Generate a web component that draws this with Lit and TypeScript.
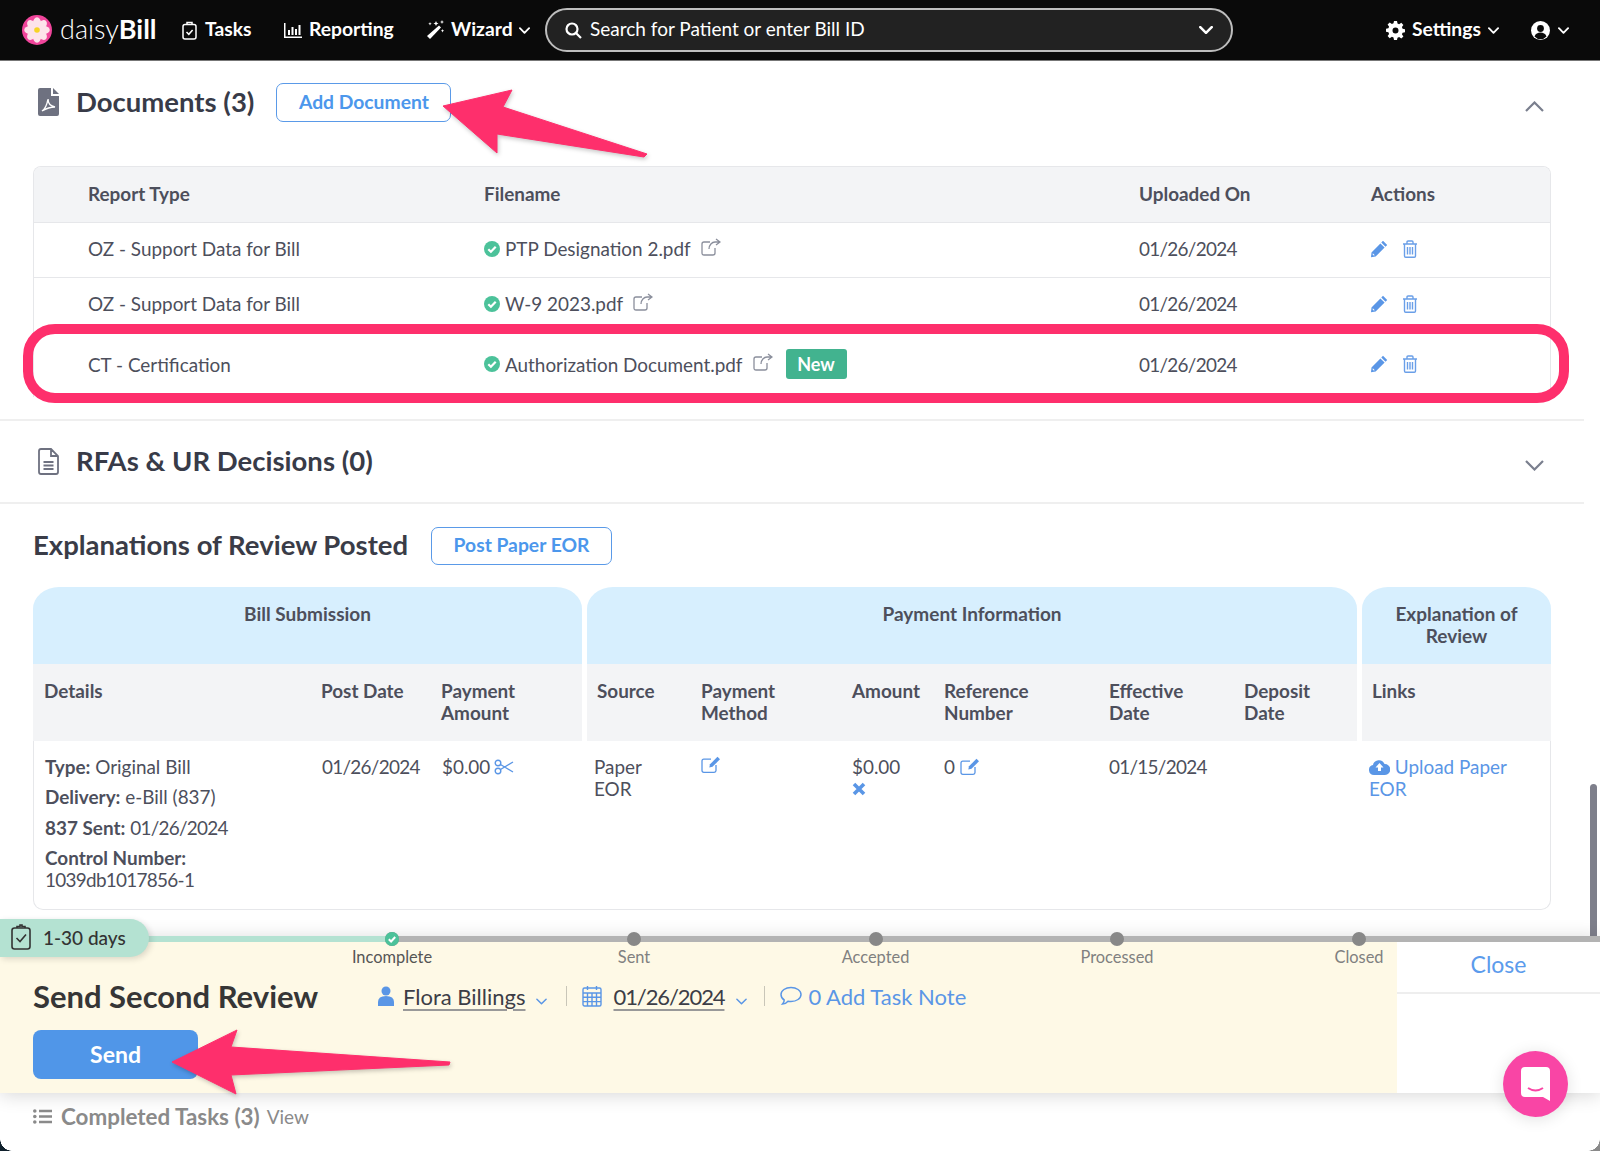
import { LitElement, html, css, svg } from "lit";
import { customElement } from "lit/decorators.js";

const chevDown = (w: number, color = "currentColor", sw = 2) => html`<svg width=${w} height=${Math.round(w * 0.6)} viewBox="0 0 12 7" fill="none" stroke=${color} stroke-width=${sw} stroke-linecap="round" stroke-linejoin="round"><path d="M1 1l5 5 5-5"/></svg>`;
const pencil = html`<svg class="ic" width="18" height="18" viewBox="0 0 18 18"><path fill="#5a96e6" d="M13 .8l4.200 4.200-1.700 1.700-4.200-4.200zM10.400 3.400l4.200 4.200L5.600 16.600 1 17.200l.5-4.800z"/><path fill="#fff" d="M2.800 13.200l2 2-1.200.2-1-1z"/></svg>`;
const trash = html`<svg class="ic" width="16" height="18" viewBox="0 0 16 18" fill="none" stroke="#6a9fe8" stroke-width="1.400"><path d="M1 4h14M5 4V2q0-1 1-1h4q1 0 1 1v2M2.500 4v12q0 1.200 1.200 1.200h8.600q1.200 0 1.200-1.200V4M5.500 7v7.500M8 7v7.500M10.500 7v7.500"/></svg>`;
const ext = html`<svg class="ic" width="20" height="18" viewBox="0 0 20 18" fill="none" stroke="#8b8f9c" stroke-width="1.300"><path d="M14 10v5q0 2-2 2H3q-2 0-2-2V6q0-2 2-2h6"/><path d="M8 11c0-4 3-7 6-7h4M15 1l4 3-4 3"/></svg>`;
const check = html`<svg class="ic" width="16" height="16" viewBox="0 0 16 16"><circle cx="8" cy="8" r="8" fill="#4cc29a"/><path d="M4.300 8.200l2.600 2.600 4.800-5" fill="none" stroke="#fff" stroke-width="2.200"/></svg>`;
const editBox = html`<svg class="ic" width="20" height="17" viewBox="0 0 20 17" fill="none" stroke="#5a96e6" stroke-width="1.300"><path d="M15 9v5.500q0 1.800-1.800 1.800H2.800Q1 16.300 1 14.500V5q0-1.800 1.800-1.800H10"/><path fill="#5a96e6" stroke="none" d="M16.500 .8l2.500 2.500-7.500 7.500-3.200.7.700-3.200z"/></svg>`;

const rows = [
  { type: "OZ - Support Data for Bill", file: "PTP Designation 2.pdf", isNew: false, tall: false },
  { type: "OZ - Support Data for Bill", file: "W-9 2023.pdf", isNew: false, tall: false },
  { type: "CT - Certification", file: "Authorization Document.pdf", isNew: true, tall: true },
];

const stages = [
  ["Incomplete", 392, true],
  ["Sent", 634, false],
  ["Accepted", 875.500, false],
  ["Processed", 1117, false],
  ["Closed", 1359, false],
] as const;

@customElement("app-root")
export class AppRoot extends LitElement {
  static styles = css`
    :host { display: block; position: relative; width: 1600px; height: 1151px; overflow: hidden; background: #fff; font-family: "Lato", "Liberation Sans", sans-serif; color: #4d4f5c; font-size: 18.900px; }
    * { box-sizing: border-box; }
    .ic { flex: none; display: block; }
    .num { letter-spacing: -.7px; }
    .numl { letter-spacing: -1.100px; }

    /* Nav */
    .nav { height: 61px; background: #0a0a0a; color: #fff; display: flex; align-items: center; padding-left: 22px; font-weight: 700; font-size: 19.300px; border-bottom: 1px solid #777; }
    .t { margin-bottom: 4px; }
    .logo { width: 30px; height: 30px; flex: none; }
    .brand { margin: 0 0 4px 8px; font-size: 27px; font-weight: 300; width: 111px; white-space: nowrap; }
    .brand b { font-weight: 700; }
    .navitem { display: flex; align-items: center; white-space: nowrap; }
    .tasks { margin-left: 11px; gap: 8px; width: 102px; }
    .reporting { gap: 7px; width: 141px; }
    .wizard { gap: 6px; width: 120px; }
    .search { width: 688px; height: 44px; flex: none; background: #222; border: 2px solid #bdbdbd; border-radius: 22px; display: flex; align-items: center; padding: 0 18px; font-weight: 400; font-size: 19px; gap: 8px; }
    .search span { flex: 1; }
    .settings { margin-left: 153px; gap: 7px; width: 145px; }
    .user { gap: 8px; }

    /* Sections */
    .sections { width: 1584px; }
    .dochead { height: 105px; padding: 22px 40px 0 38px; display: flex; align-items: flex-start; }
    .dochead .title { margin-left: 17px; }
    .title { font-size: 27.500px; font-weight: 700; color: #383b48; line-height: 38px; white-space: nowrap; }
    .outbtn { border: 1.500px solid #5a9ae8; border-radius: 7px; color: #4c97ec; font-weight: 700; font-size: 19.300px; background: #fff; display: flex; align-items: center; justify-content: center; padding-bottom: 2px; }
    .add { width: 175px; height: 39px; margin-left: 22px; }
    .chev { margin-left: auto; margin-top: 10px; }
    .doctable { margin-left: 33px; width: 1518px; border: 1px solid #e6e7ea; border-bottom: 0; border-radius: 8px 8px 0 0; overflow: hidden; }
    .drow { display: grid; grid-template-columns: 396px 655px 232px 1fr; padding: 0 0 3px 54px; align-items: center; height: 55px; border-bottom: 1px solid #e6e7ea; }
    .drow.head { background: #f3f4f6; font-weight: 700; height: 56px; }
    .drow.tall { height: 64px; border-bottom: 0; padding-bottom: 2px; }
    .file { display: flex; align-items: center; gap: 5px; white-space: nowrap; }
    .file .ic:nth-child(3) { margin: 0 0 4px 5px; }
    .badge { background: #42b38f; color: #fff; font-weight: 700; font-size: 18px; border-radius: 3px; height: 30px; width: 61px; display: flex; align-items: center; justify-content: center; margin-left: 8px; }
    .acts { display: flex; gap: 14px; align-items: center; margin-left: -1px; }
    .sect { height: 85px; margin-top: 22px; border-top: 2px solid #efefef; border-bottom: 2px solid #efefef; display: flex; align-items: center; padding: 0 40px 0 38px; }
    .sect .title { margin: 0 0 2px 17px; }
    .sect .chev { margin-top: 3px; }

    /* EOR */
    .eor { padding: 22px 0 0 33px; width: 1551px; }
    .eorhead { display: flex; align-items: center; height: 39px; }
    .eorhead .title { color: #3a3c47; width: 398px; margin-bottom: 2px; }
    .post { width: 181px; height: 38px; }
    .eortable { margin-top: 22px; width: 1518px; }
    .groups { display: grid; grid-template-columns: 549px 770px 189px; gap: 5px; }
    .g { background: #d7effe; border-radius: 26px 26px 0 0 / 22px 22px 0 0; height: 77px; padding-top: 16px; text-align: center; font-weight: 700; font-size: 19px; line-height: 21.500px; }
    .g.links { padding: 16px 30px 0; }
    .subs { display: grid; grid-template-columns: 549px 770px 189px; gap: 5px; }
    .sub { background: #f3f4f6; height: 77px; display: grid; padding: 16px 0 0 10px; font-weight: 700; line-height: 22px; }
    .sub.cols1 { padding-left: 11px; }
    .body { display: grid; grid-template-columns: 549px 770px 189px; gap: 5px; height: 169px; border: 1px solid #e6e7ea; border-top: 0; border-radius: 0 0 10px 10px; line-height: 22px; }
    .cols1 { grid-template-columns: 277px 120px 1fr; }
    .cols2 { grid-template-columns: 104px 151px 92px 165px 135px 1fr; }
    .b { display: grid; padding: 15px 0 0 11px; align-items: start; align-content: start; }
    .b.c2 { padding-left: 10px; margin-left: -1px; }
    .b.c3 { padding: 15px 30px 0 7px; margin-left: -1px; }
    .b > div { min-width: 0; }
    .b strong { font-weight: 700; }
    .paper { margin-left: -3px; }
    .line { margin-bottom: 8.400px; white-space: nowrap; }
    .money { display: flex; gap: 4px; align-items: center; }
    .blue { color: #5a96e6; }
    .nw { white-space: nowrap; }
    .inl { display: inline-flex; vertical-align: top; margin-top: 2px; }

    /* Bottom tray */
    .tray { position: absolute; left: 0; right: 0; top: 936px; height: 157px; box-shadow: 0 2px 18px rgba(0,0,0,.16); display: grid; grid-template-columns: 1397px 1fr; grid-template-rows: 6px 1fr; background: #fff; }
    .bar { grid-column: 1 / -1; background: linear-gradient(to right, #b4e2d2 392px, #b3b3b3 392px); }
    .yellow { background: #fef9e6; padding: 33px 0 0 33px; }
    .close { height: 52px; border-bottom: 2px solid #eee; display: flex; align-items: center; justify-content: center; color: #5b9bec; font-size: 23px; padding-bottom: 7px; }
    .task { display: flex; align-items: center; height: 42px; }
    .task h2 { margin: 0; width: 345px; font-size: 31px; font-weight: 700; color: #363636; white-space: nowrap; }
    .meta { display: flex; align-items: center; font-size: 22px; color: #3c3d46; white-space: nowrap; }
    .meta u { text-decoration-color: #999; text-underline-offset: 4px; }
    .sep { width: 1px; height: 20px; background: #c9c6b8; }
    .send { margin-top: 13px; width: 165px; height: 49px; border-radius: 8px; background: #5096e8; color: #fff; font-weight: 700; font-size: 23px; display: flex; align-items: center; justify-content: center; padding-bottom: 2px; }
    .pill { position: absolute; left: 0; top: 919px; width: 149px; height: 38px; background: #b4e2d2; border-radius: 0 19px 19px 0; display: flex; align-items: center; gap: 12px; padding: 0 0 2px 11px; font-size: 19px; font-weight: 500; color: #333; box-shadow: 2px 2px 6px rgba(0,0,0,.14); }
    .dot { position: absolute; top: 932px; width: 14px; height: 14px; border-radius: 50%; background: #888; margin-left: -7px; }
    .dot svg { display: block; }
    .lab { position: absolute; top: 947px; width: 120px; margin-left: -60px; text-align: center; font-size: 16.400px; line-height: 20px; color: #808080; }
    .lab.on { color: #555; }
    .done { position: absolute; left: 33px; top: 1104px; display: flex; align-items: center; height: 24px; font-size: 22.400px; font-weight: 700; color: #8a8a8a; white-space: nowrap; }
    .done span { font-weight: 400; font-size: 19px; margin-left: 7px; }
    .chat { position: absolute; left: 1503px; top: 1051px; width: 65px; height: 66px; border-radius: 50%; background: #f945a5; display: flex; align-items: center; justify-content: center; box-shadow: 0 2px 16px rgba(0,0,0,.12); }
    .scroll { position: absolute; left: 1590px; top: 784px; width: 7px; height: 154px; background: #7e7f8b; border-radius: 4px 4px 0 0; }
    .ring { position: absolute; left: 23px; top: 324px; width: 1546px; height: 79px; border: 10px solid #fe2f6c; border-radius: 32px; pointer-events: none; }
    .arrow { position: absolute; left: 0; top: 0; pointer-events: none; filter: drop-shadow(1px 2px 2px rgba(0,0,0,.22)); }
    .corner { position: absolute; width: 12px; height: 12px; bottom: 0; }
    .corner.l { left: 0; background: radial-gradient(circle at 100% 0, transparent 11.500px, #10202c 12px); }
    .corner.r { right: 0; background: radial-gradient(circle at 0 0, transparent 11.500px, #8a8a8a 12px); }
  `;

  private logo() {
    const petals = [0, 45, 90, 135, 180, 225, 270, 315];
    return html`<svg class="logo" viewBox="0 0 30 30"><circle cx="15" cy="15" r="15" fill="#f0459b"/>
      ${petals.map((a) => svg`<ellipse cx="15" cy="8" rx="4" ry="5.800" fill="#fde3ea" transform="rotate(${a} 15 15)"/>`)}
      <circle cx="15" cy="15" r="2.800" fill="#f7d426"/></svg>`;
  }

  private navBar() {
    return html`<div class="nav">
      ${this.logo()}
      <div class="brand">daisy<b>Bill</b></div>
      <div class="navitem tasks"><svg class="ic" width="15" height="19" viewBox="0 0 15 19" fill="none" stroke="#fff" stroke-width="1.500"><rect x="1" y="3.500" width="13" height="14.500" rx="2"/><path d="M5 3.500V1.500h5v2M4.500 11l2.300 2.300 3.800-4.300"/></svg><span class="t">Tasks</span></div>
      <div class="navitem reporting"><svg class="ic" width="18" height="15" viewBox="0 0 18 15" fill="#fff"><path d="M0 0h1.500v13.500H18V15H0z"/><path d="M4 7h2v5H4zM7.500 4h2v8h-2zM11 6h2v6h-2zM14.500 2h2v10h-2z"/></svg><span class="t">Reporting</span></div>
      <div class="navitem wizard"><svg class="ic" width="20" height="20" viewBox="0 0 20 20" fill="#fff"><path d="M14 5.500l2 2L5 19l-3-3z"/><path d="M11 1l.8 1.700L13.500 3.500l-1.700.8L11 6l-.8-1.700L8.500 3.500l1.700-.8zM17 0l.6 1.400L19 2l-1.400.6L17 4l-.6-1.400L15 2l1.400-.6zM17.500 9l.5 1.200 1.200.5-1.200.5-.5 1.200-.5-1.200-1.200-.5 1.200-.5zM5 2l.5 1.200 1.200.5-1.200.5L5 5.400l-.5-1.200-1.200-.5 1.200-.5z"/></svg><span class="t">Wizard</span> ${chevDown(11)}</div>
      <div class="search"><svg class="ic" width="17" height="17" viewBox="0 0 17 17" fill="none" stroke="#fff" stroke-width="2.200"><circle cx="7" cy="7" r="5.500"/><path d="M11 11l5 5"/></svg><span class="t">Search for Patient or enter Bill ID</span>${chevDown(14, "#fff", 2.200)}</div>
      <div class="navitem settings"><svg class="ic" width="19" height="19" viewBox="0 0 19 19" fill="#fff"><path fill-rule="evenodd" d="M8 0h3l.5 2.600 1.600.7 2.200-1.500 2.100 2.100-1.500 2.200.7 1.600L19 8.200v3l-2.400.5-.7 1.600 1.500 2.200-2.100 2.100-2.200-1.500-1.600.7L11 19H8l-.5-2.600-1.600-.7-2.200 1.500-2.100-2.100 1.500-2.200-.7-1.600L0 10.800v-3l2.400-.5.7-1.600L1.600 3.500l2.100-2.100 2.200 1.500 1.600-.7zM9.500 6.500a3 3 0 100 6 3 3 0 000-6z"/></svg><span class="t">Settings</span> ${chevDown(11)}</div>
      <div class="navitem user"><svg class="ic" width="19" height="19" viewBox="0 0 19 19"><circle cx="9.500" cy="9.500" r="9.500" fill="#fff"/><circle cx="9.500" cy="7.500" r="3.400" fill="#0a0a0a"/><path d="M3.500 15.500c1-3 3.400-4 6-4s5 1 6 4a8 8 0 01-12 0z" fill="#0a0a0a"/></svg>${chevDown(11)}</div>
    </div>`;
  }

  private docs() {
    return html`
      <div class="dochead">
        <svg class="ic" width="21" height="28" viewBox="0 0 21 28" style="margin-top:5px"><path fill="#6e7180" d="M2 0h11v8h8v18a2 2 0 01-2 2H2a2 2 0 01-2-2V2a2 2 0 012-2z"/><path fill="#6e7180" d="M15 0l6 6h-6z"/><path fill="none" stroke="#fff" stroke-width="1.400" d="M4 23c3-2 5-6 6-12 0 4 2 7 7 8-4 0-8 1-13 4z"/></svg>
        <div class="title">Documents (3)</div>
        <div class="outbtn add">Add Document</div>
        <div class="chev"><svg width="19" height="11" viewBox="0 0 19 11" fill="none" stroke="#7a7f8e" stroke-width="2.200"><path d="M1 10l8.500-8.500L18 10"/></svg></div>
      </div>
      <div class="doctable">
        <div class="drow head"><div>Report Type</div><div>Filename</div><div>Uploaded On</div><div>Actions</div></div>
        ${rows.map((r) => html`<div class="drow ${r.tall ? "tall" : ""}">
          <div>${r.type}</div>
          <div class="file">${check}<span>${r.file}</span>${ext}${r.isNew ? html`<div class="badge">New</div>` : ""}</div>
          <div class="num">01/26/2024</div>
          <div class="acts">${pencil}${trash}</div>
        </div>`)}
      </div>
      <div class="sect">
        <svg class="ic" width="21" height="27" viewBox="0 0 21 27" fill="none" stroke="#6e7180" stroke-width="1.800"><path d="M3 1h10l7 7v16q0 2-2 2H3q-2 0-2-2V3q0-2 2-2zM13 1v7h7M5.500 14h10M5.500 17.500h10M5.500 21h10"/></svg>
        <div class="title">RFAs &amp; UR Decisions (0)</div>
        <div class="chev"><svg width="19" height="11" viewBox="0 0 19 11" fill="none" stroke="#7a7f8e" stroke-width="2.200"><path d="M1 1l8.500 8.500L18 1"/></svg></div>
      </div>`;
  }

  private eor() {
    return html`<div class="eor">
      <div class="eorhead"><div class="title">Explanations of Review Posted</div><div class="outbtn post">Post Paper EOR</div></div>
      <div class="eortable">
        <div class="groups"><div class="g">Bill Submission</div><div class="g">Payment Information</div><div class="g links">Explanation of Review</div></div>
        <div class="subs">
          <div class="sub cols1"><div>Details</div><div>Post Date</div><div>Payment<br />Amount</div></div>
          <div class="sub cols2"><div>Source</div><div>Payment<br />Method</div><div>Amount</div><div>Reference<br />Number</div><div>Effective<br />Date</div><div>Deposit<br />Date</div></div>
          <div class="sub"><div>Links</div></div>
        </div>
        <div class="body">
          <div class="b cols1">
            <div>
              <div class="line"><strong>Type:</strong> Original Bill</div>
              <div class="line"><strong>Delivery:</strong> e-Bill (837)</div>
              <div class="line"><strong>837 Sent:</strong> <span class="num">01/26/2024</span></div>
              <div class="nw"><strong>Control Number:</strong><br /><span class="num">1039db1017856-1</span></div>
            </div>
            <div class="num">01/26/2024</div>
            <div class="money">$0.00 <svg class="ic" width="20" height="16" viewBox="0 0 20 16" fill="none" stroke="#5a96e6" stroke-width="1.400"><circle cx="4" cy="4" r="2.800"/><circle cx="4" cy="12" r="2.800"/><path d="M6.500 5.500L19 13M6.500 10.500L19 3"/></svg></div>
          </div>
          <div class="b c2 cols2">
            <div class="paper">Paper<br />EOR</div>
            <div>${editBox}</div>
            <div>$0.00<br /><svg class="ic" width="14" height="14" viewBox="0 0 14 14" style="margin-top:4px" fill="none" stroke="#5a96e6" stroke-width="3.600"><path d="M2 2l10 10M12 2L2 12"/></svg></div>
            <div class="nw">0 <span class="inl">${editBox}</span></div>
            <div class="num">01/15/2024</div>
            <div></div>
          </div>
          <div class="b c3 blue">
            <div><svg width="21" height="16" viewBox="0 0 21 16" style="vertical-align:-1px"><path fill="#5a96e6" d="M5 16a5 5 0 01-1-9.900A6 6 0 0115.500 5 5.500 5.500 0 0116 16z"/><path fill="#fff" d="M10.500 4l4 4.500H12V12H9V8.500H6.500z"/></svg> Upload Paper EOR</div>
          </div>
        </div>
      </div>
    </div>`;
  }

  private tray() {
    return html`
      <div class="tray">
        <div class="bar"></div>
        <div class="yellow">
          <div class="task">
            <h2>Send Second Review</h2>
            <div class="meta">
              <svg class="ic" width="16" height="20" viewBox="0 0 16 20" fill="#5a96e6"><circle cx="8" cy="5" r="4.500"/><path d="M0 20v-4q0-6 8-6t8 6v4z"/></svg>
              <u style="margin-left:9px">Flora Billings</u>
              <span style="margin:0 19px 0 11px">${chevDown(11, "#5a96e6", 1.600)}</span>
              <div class="sep"></div>
              <svg class="ic" style="margin-left:15px" width="20" height="22" viewBox="0 0 20 22" fill="none" stroke="#5a96e6" stroke-width="1.400"><rect x="1" y="3" width="18" height="18" rx="1.500"/><path d="M1 8h18M1 12.300h18M1 16.600h18M5.500 8v13M10 8v13M14.500 8v13M5.500 1v4M14.500 1v4" /></svg>
              <u class="numl" style="margin-left:11px">01/26/2024</u>
              <span style="margin:0 17px 0 12px">${chevDown(11, "#5a96e6", 1.600)}</span>
              <div class="sep"></div>
              <svg class="ic" style="margin-left:15px" width="22" height="20" viewBox="0 0 22 20" fill="none" stroke="#5a96e6" stroke-width="1.500"><path d="M11 1.500c5.500 0 10 3 10 7s-4.500 7-10 7c-1 0-2-.1-3-.3C6.500 17 4 18 2.500 18c1-1 1.800-2.500 1.700-4C2.200 12.700 1 10.700 1 8.500c0-4 4.500-7 10-7z"/></svg>
              <span class="blue" style="margin-left:6px">0 Add Task Note</span>
            </div>
          </div>
          <div class="send">Send</div>
        </div>
        <div><div class="close">Close</div></div>
      </div>
      <div class="pill"><svg class="ic" width="20" height="26" viewBox="0 0 20 26" fill="none" stroke="#333" stroke-width="1.600"><rect x="1" y="4" width="18" height="21" rx="2.500"/><path d="M6 4V2.500h3V1h2v1.500h3V4M5.500 14l3.500 3.500 6-7"/></svg>1-30 days</div>
      ${stages.map(([name, x, on]) => html`
        <div class="dot" style="left:${x}px">${on ? html`<svg width="14" height="14" viewBox="0 0 14 14"><circle cx="7" cy="7" r="7" fill="#4cc29a"/><path d="M3.800 7.200l2.300 2.300 4.100-4.500" fill="none" stroke="#fff" stroke-width="2"/></svg>` : ""}</div>
        <div class="lab ${on ? "on" : ""}" style="left:${x}px">${name}</div>`)}
      <div class="done"><svg class="ic" width="19" height="15" viewBox="0 0 19 15" fill="#8a8a8a" style="margin-right:9px"><circle cx="1.800" cy="2" r="1.800"/><circle cx="1.800" cy="7.500" r="1.800"/><circle cx="1.800" cy="13" r="1.800"/><path d="M6 .8h13v2.400H6zM6 6.300h13v2.400H6zM6 11.800h13v2.400H6z"/></svg>Completed Tasks (3)<span>View</span></div>
      <div class="chat"><svg width="29" height="34" viewBox="0 0 29 34"><path fill="#fff" d="M4 0h21q4 0 4 4v30l-7-4H4q-4 0-4-4V4q0-4 4-4z"/><path d="M7 21q7.500 5 15 0" fill="none" stroke="#f945a5" stroke-width="2"/></svg></div>`;
  }

  render() {
    return html`
      ${this.navBar()}
      <div class="sections">${this.docs()}</div>
      ${this.eor()}
      <div class="scroll"></div>
      ${this.tray()}
      <div class="ring"></div>
      <svg class="arrow" width="1600" height="1151" viewBox="0 0 1600 1151">
        <path fill="#fe2f6c" stroke="#fe2f6c" stroke-width="1" stroke-linejoin="round" d="M443 106L512 90 503 107 647 154 644 157 497 134 497 153z"/>
        <path fill="#fe2f6c" stroke="#fe2f6c" stroke-width="1" stroke-linejoin="round" d="M172 1062L237 1030 231 1047 450 1062 449 1065 231 1075 236 1094z"/>
      </svg>
      <div class="corner l"></div>
      <div class="corner r"></div>`;
  }
}
